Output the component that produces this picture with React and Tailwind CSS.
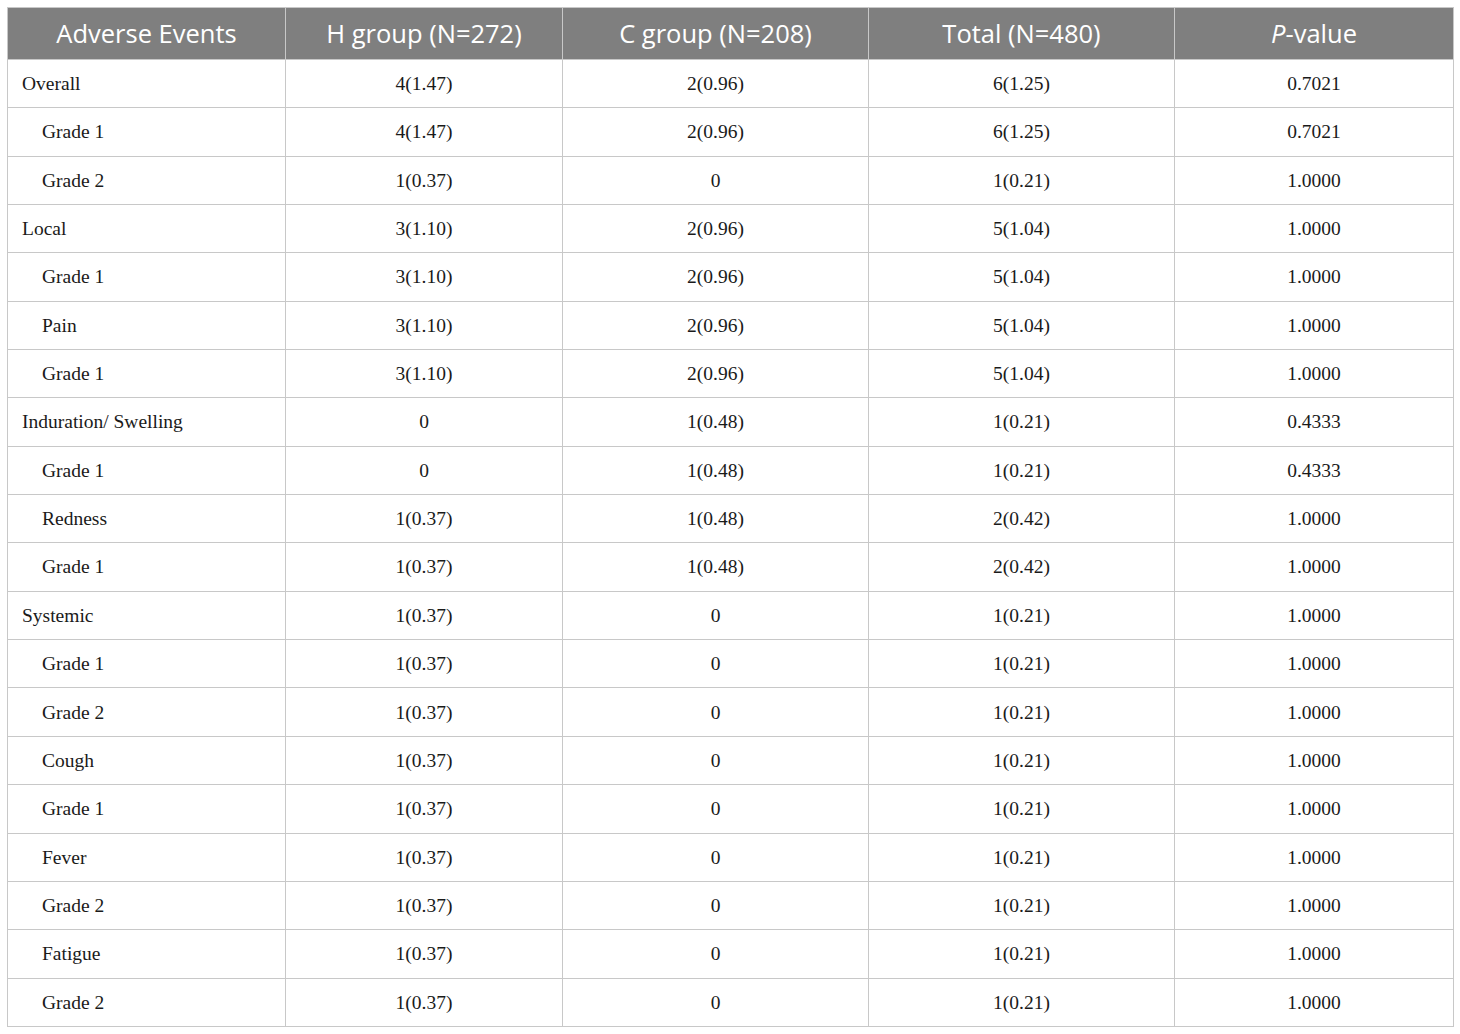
const rows = [
  ["Overall", "4(1.47)", "2(0.96)", "6(1.25)", "0.7021", false],
  ["Grade 1", "4(1.47)", "2(0.96)", "6(1.25)", "0.7021", true],
  ["Grade 2", "1(0.37)", "0", "1(0.21)", "1.0000", true],
  ["Local", "3(1.10)", "2(0.96)", "5(1.04)", "1.0000", false],
  ["Grade 1", "3(1.10)", "2(0.96)", "5(1.04)", "1.0000", true],
  ["Pain", "3(1.10)", "2(0.96)", "5(1.04)", "1.0000", true],
  ["Grade 1", "3(1.10)", "2(0.96)", "5(1.04)", "1.0000", true],
  ["Induration/ Swelling", "0", "1(0.48)", "1(0.21)", "0.4333", false],
  ["Grade 1", "0", "1(0.48)", "1(0.21)", "0.4333", true],
  ["Redness", "1(0.37)", "1(0.48)", "2(0.42)", "1.0000", true],
  ["Grade 1", "1(0.37)", "1(0.48)", "2(0.42)", "1.0000", true],
  ["Systemic", "1(0.37)", "0", "1(0.21)", "1.0000", false],
  ["Grade 1", "1(0.37)", "0", "1(0.21)", "1.0000", true],
  ["Grade 2", "1(0.37)", "0", "1(0.21)", "1.0000", true],
  ["Cough", "1(0.37)", "0", "1(0.21)", "1.0000", true],
  ["Grade 1", "1(0.37)", "0", "1(0.21)", "1.0000", true],
  ["Fever", "1(0.37)", "0", "1(0.21)", "1.0000", true],
  ["Grade 2", "1(0.37)", "0", "1(0.21)", "1.0000", true],
  ["Fatigue", "1(0.37)", "0", "1(0.21)", "1.0000", true],
  ["Grade 2", "1(0.37)", "0", "1(0.21)", "1.0000", true],
];

export default function App() {
  return (
    <div className="bg-white w-[1460px] h-[1034px] pt-[7px] pl-[7px]">
      <table className="border-collapse w-[1446px] table-fixed">
        <colgroup>
          <col className="w-[278px]" />
          <col className="w-[277px]" />
          <col className="w-[306px]" />
          <col className="w-[306px]" />
          <col className="w-[279px]" />
        </colgroup>
        <thead>
          <tr className="bg-[#7f7f7f] h-[52px] text-white text-[25.5px] font-['Open_Sans',sans-serif]">
            <th className="border border-[#c8c8c8] font-normal text-center">Adverse Events</th>
            <th className="border border-[#c8c8c8] font-normal text-center">H group (N=272)</th>
            <th className="border border-[#c8c8c8] font-normal text-center">C group (N=208)</th>
            <th className="border border-[#c8c8c8] font-normal text-center">Total (N=480)</th>
            <th className="border border-[#c8c8c8] font-normal text-center"><i>P</i>-value</th>
          </tr>
        </thead>
        <tbody className="font-['Liberation_Serif',serif] text-[19.5px] text-[#1a1a1a]">
          {rows.map((r, i) => (
            <tr key={i} className="h-[48.35px]">
              <td className={`border border-[#c8c8c8] text-left ${r[5] ? "pl-[34px]" : "pl-[14px]"}`}>{r[0]}</td>
              <td className="border border-[#c8c8c8] text-center">{r[1]}</td>
              <td className="border border-[#c8c8c8] text-center">{r[2]}</td>
              <td className="border border-[#c8c8c8] text-center">{r[3]}</td>
              <td className="border border-[#c8c8c8] text-center">{r[4]}</td>
            </tr>
          ))}
        </tbody>
      </table>
    </div>
  );
}
